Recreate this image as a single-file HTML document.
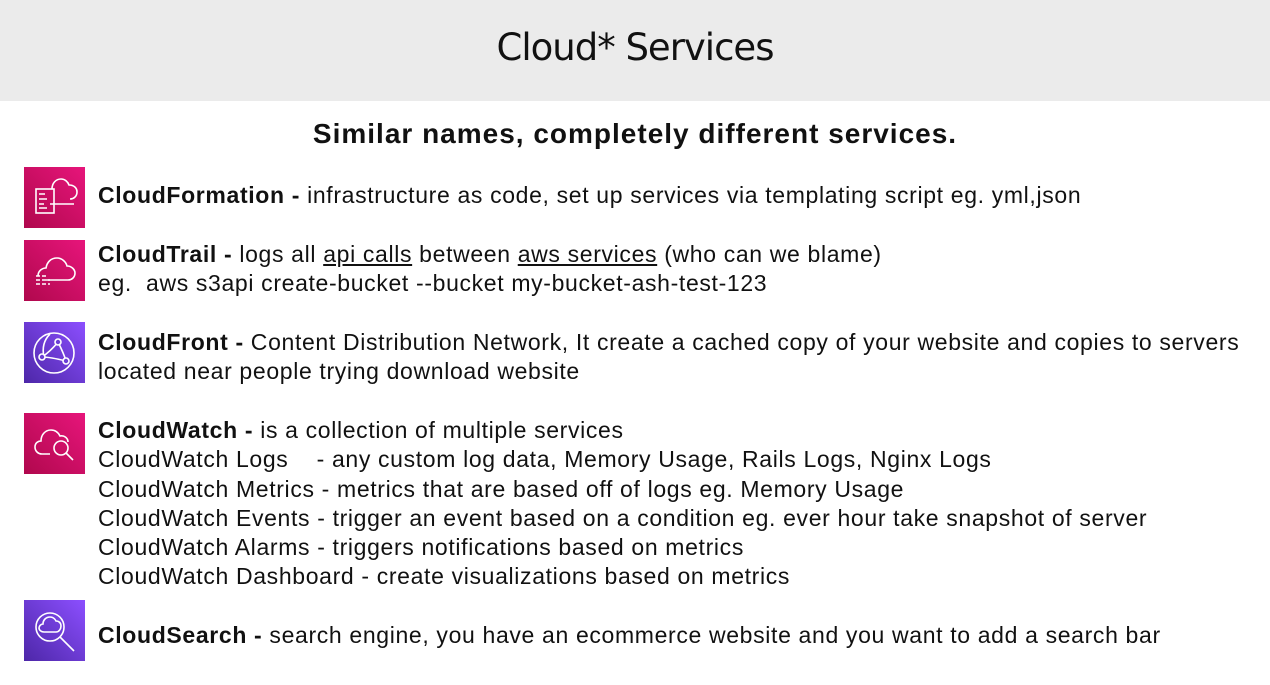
<!DOCTYPE html>
<html><head><meta charset="utf-8"><style>
*{margin:0;padding:0;box-sizing:border-box}
body{width:1270px;height:685px;background:#fff;font-family:"Liberation Sans",sans-serif;color:#111;position:relative;overflow:hidden}
.hdr{position:absolute;left:0;top:0;width:1270px;height:101px;background:#ebebeb}
.hdr h1{position:absolute;left:0;width:100%;top:26px;text-align:center;font-family:"Comic Sans MS","DejaVu Sans",sans-serif;font-weight:normal;font-size:37px;letter-spacing:-1px}
.sub{position:absolute;top:118px;width:100%;text-align:center;font-weight:bold;font-size:28px;letter-spacing:1px}
.ic{position:absolute;left:24px;width:61px;height:61px}
.pink{background:linear-gradient(45deg,#b0084d,#e7157b)}
.purp{background:linear-gradient(45deg,#4d27a8,#8c4fff)}
.t{position:absolute;left:98px;font-size:23px;line-height:29.3px;white-space:nowrap;letter-spacing:0.65px}
b{font-weight:bold}
u{text-decoration:underline}
svg{position:absolute;left:0;top:0}
</style></head><body>
<div class="hdr"><h1>Cloud* Services</h1></div>
<div class="sub">Similar names, completely different services.</div>

<div class="ic pink" style="top:167px"><svg width="61" height="61" fill="none" stroke="#fff" stroke-width="1.6"><rect x="12" y="22" width="18" height="24"/><path d="M15 27h6M15 32h8M15 37h5M15 41h8M26 37h24"/><path d="M28 22c0-6 4-10 9-10 4 0 7 3 8 6 5 0 8 3 8 7 0 4-3 7-7 7"/></svg></div>
<div class="ic pink" style="top:240px"><svg width="61" height="61" fill="none" stroke="#fff" stroke-width="1.6"><path d="M14 36c0-5 4-8 8-8 1-6 5-10 11-10 5 0 9 4 10 8 5 0 8 4 8 7 0 4-3 7-7 7H22"/><path d="M12 36h10M12 40h14M12 44h14" stroke-dasharray="4 2"/></svg></div>
<div class="ic purp" style="top:322px"><svg width="61" height="61" fill="none" stroke="#fff" stroke-width="1.6"><circle cx="30" cy="31" r="20"/><path d="M18 35c6-4 12-10 16-15M34 20c4 8 6 12 8 19M18 35c8 0 16 2 24 4M26 12c-6 6-8 14-6 23"/><circle cx="34" cy="20" r="3" fill="#6b3fd6"/><circle cx="18" cy="35" r="3" fill="#6b3fd6"/><circle cx="42" cy="39" r="3" fill="#6b3fd6"/></svg></div>
<div class="ic pink" style="top:413px"><svg width="61" height="61" fill="none" stroke="#fff" stroke-width="1.6"><path d="M26 41H18c-4 0-7-3-7-7s3-6 6-6c0-6 4-11 10-11 4 0 7 2 9 6 4-1 8 2 8 6"/><circle cx="37" cy="35" r="7"/><path d="M42 40l7 7"/></svg></div>
<div class="ic purp" style="top:600px"><svg width="61" height="61" fill="none" stroke="#fff" stroke-width="1.6"><circle cx="26" cy="27" r="14"/><path d="M36 37l14 14"/><path d="M20 32c-3 0-5-2-5-4s2-4 4-4c0-4 3-7 7-7 3 0 5 2 6 4 3 0 5 2 5 5 0 3-2 6-5 6z"/></svg></div>

<div class="t" style="top:181px"><b>CloudFormation -</b> infrastructure as code, set up services via templating script eg. yml,json</div>
<div class="t" style="top:240px"><b>CloudTrail -</b> logs all <u>api calls</u> between <u>aws services</u> (who can we blame)<br>eg.&nbsp; aws s3api create-bucket --bucket my-bucket-ash-test-123</div>
<div class="t" style="top:328px"><b>CloudFront -</b> Content Distribution Network, It create a cached copy of your website and copies to servers<br>located near people trying download website</div>
<div class="t" style="top:416px"><b>CloudWatch -</b> is a collection of multiple services<br>CloudWatch Logs&nbsp;&nbsp;&nbsp; - any custom log data, Memory Usage, Rails Logs, Nginx Logs<br>CloudWatch Metrics - metrics that are based off of logs eg. Memory Usage<br>CloudWatch Events - trigger an event based on a condition eg. ever hour take snapshot of server<br>CloudWatch Alarms - triggers notifications based on metrics<br>CloudWatch Dashboard - create visualizations based on metrics</div>
<div class="t" style="top:621px"><b>CloudSearch -</b> search engine, you have an ecommerce website and you want to add a search bar</div>
</body></html>
